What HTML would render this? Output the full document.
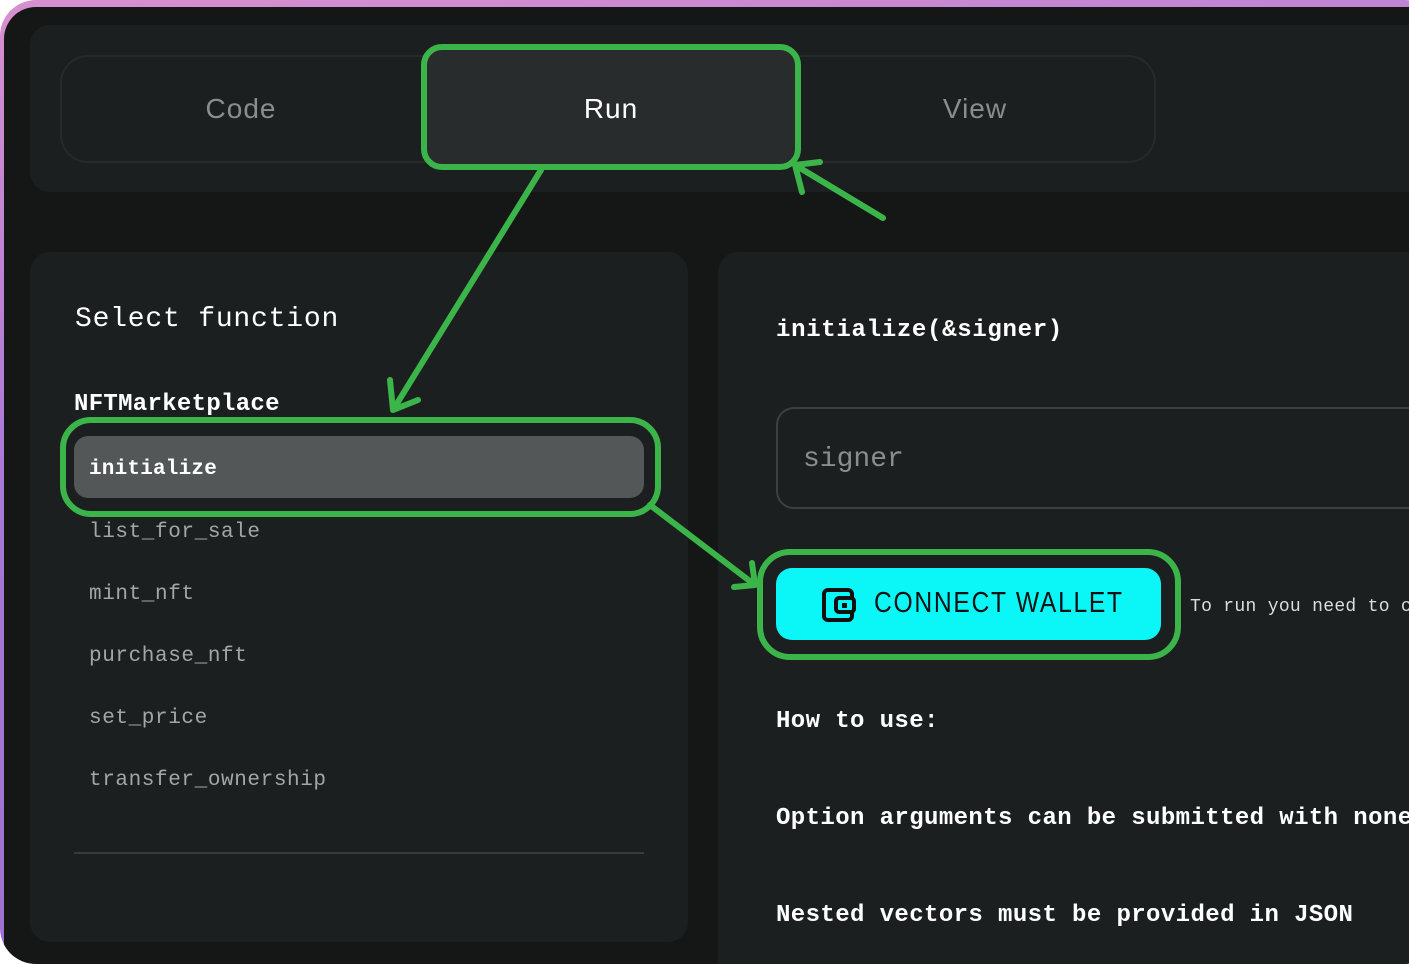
<!DOCTYPE html>
<html><head><style>
*{margin:0;padding:0;box-sizing:border-box}
html,body{width:1409px;height:964px;overflow:hidden}
body{background:#fff;position:relative;font-family:"Liberation Mono",monospace}
.frame{position:absolute;left:0;top:0;width:1440px;height:964px;border-radius:36px;background:linear-gradient(170deg,#d890cf,#a878d8 40%,#9a6ccc);overflow:hidden}
.inner{position:absolute;left:4px;top:7px;width:1440px;height:980px;border-radius:32px;background:#151717;overflow:hidden}
.abs{position:absolute}
.panel{background:#1c1f1f;border-radius:20px}
.tab{position:absolute;top:48px;height:108px;display:flex;align-items:center;justify-content:center;font-family:"Liberation Sans",sans-serif;font-size:28px;color:#8a8d8f;letter-spacing:1px}
.fn{position:absolute;left:85px;font-size:21px;color:#a3a6a7;letter-spacing:0.6px}
.b{color:#fff;font-weight:bold;letter-spacing:0.4px}
</style></head><body>
<div class="frame">
<div class="inner">
 <div class="abs panel" style="left:26px;top:18px;width:1420px;height:167px"></div>
 <div class="abs" style="left:56px;top:48px;width:1096px;height:108px;border:2px solid #262a2a;border-radius:28px"></div>
 <div class="tab" style="left:56px;width:362px">Code</div>
 <div class="abs" style="left:420px;top:42px;width:374px;height:118px;background:#282c2c;border-radius:18px"></div>
 <div class="tab" style="left:420px;width:374px;color:#fff;top:48px">Run</div>
 <div class="tab" style="left:790px;width:362px">View</div>

 <div class="abs panel" style="left:26px;top:245px;width:658px;height:690px"></div>
 <div class="abs b" style="left:71px;top:297px;font-size:28px;font-weight:normal;letter-spacing:0.8px">Select function</div>
 <div class="abs b" style="left:70px;top:384px;font-size:24px;letter-spacing:0.3px">NFTMarketplace</div>
 <div class="abs" style="left:70px;top:429px;width:570px;height:62px;background:#545757;border-radius:14px"></div>
 <div class="abs b" style="left:85px;top:451px;font-size:21px;letter-spacing:0.2px">initialize</div>
 <div class="fn" style="top:514px">list_for_sale</div>
 <div class="fn" style="top:576px">mint_nft</div>
 <div class="fn" style="top:638px">purchase_nft</div>
 <div class="fn" style="top:700px">set_price</div>
 <div class="fn" style="top:762px">transfer_ownership</div>
 <div class="abs" style="left:70px;top:845px;width:570px;height:2px;background:#383b3b"></div>

 <div class="abs panel" style="left:714px;top:245px;width:760px;height:740px"></div>
 <div class="abs b" style="left:772px;top:310px;font-size:24px;letter-spacing:0.7px">initialize(&amp;signer)</div>
 <div class="abs" style="left:772px;top:400px;width:700px;height:102px;border:2px solid #3c4040;border-radius:18px"></div>
 <div class="abs" style="left:799px;top:437px;font-size:28px;color:#8a8d8f">signer</div>
 <div class="abs" style="left:772px;top:561px;width:385px;height:72px;background:#0bf7f7;border-radius:16px"></div>
 <svg class="abs" style="left:817px;top:580px" width="36" height="36" viewBox="0 0 36 36"><rect x="3" y="3" width="28" height="30" rx="4" fill="none" stroke="#111" stroke-width="4"/><rect x="15" y="11" width="18" height="14" rx="3" fill="#0bf7f7" stroke="#111" stroke-width="4"/><rect x="21" y="16" width="5" height="5" fill="#111"/></svg>
 <div class="abs" style="left:870px;top:580px;font-family:'Liberation Sans',sans-serif;font-size:29px;color:#111;letter-spacing:2px;transform:scaleX(.85);transform-origin:left">CONNECT WALLET</div>
 <div class="abs" style="left:1186px;top:590px;font-size:18px;color:#ddd;white-space:nowrap;letter-spacing:0.3px">To run you need to connect</div>
 <div class="abs b" style="left:772px;top:701px;font-size:24px">How to use:</div>
 <div class="abs b" style="left:772px;top:798px;font-size:24px;white-space:nowrap">Option arguments can be submitted with none</div>
 <div class="abs b" style="left:772px;top:895px;font-size:24px;white-space:nowrap">Nested vectors must be provided in JSON</div>
</div>
</div>
<svg class="abs" style="left:0;top:0" width="1409" height="964" viewBox="0 0 1409 964" fill="none" stroke="#3bb54a" stroke-width="6" stroke-linecap="round" stroke-linejoin="round">
 <rect x="424" y="47" width="374" height="120" rx="18"/>
 <rect x="63" y="420" width="595" height="94" rx="28"/>
 <rect x="760" y="552" width="418" height="105" rx="30"/>
 <path d="M541 170 L393 410 M393 410 L390 380 M393 410 L418 400"/>
 <path d="M883 218 L795 165 M795 165 L802 192 M795 165 L820 162"/>
 <path d="M650 505 L755 585 M755 585 L734 587 M755 585 L752 563"/>
</svg>
</body></html>
